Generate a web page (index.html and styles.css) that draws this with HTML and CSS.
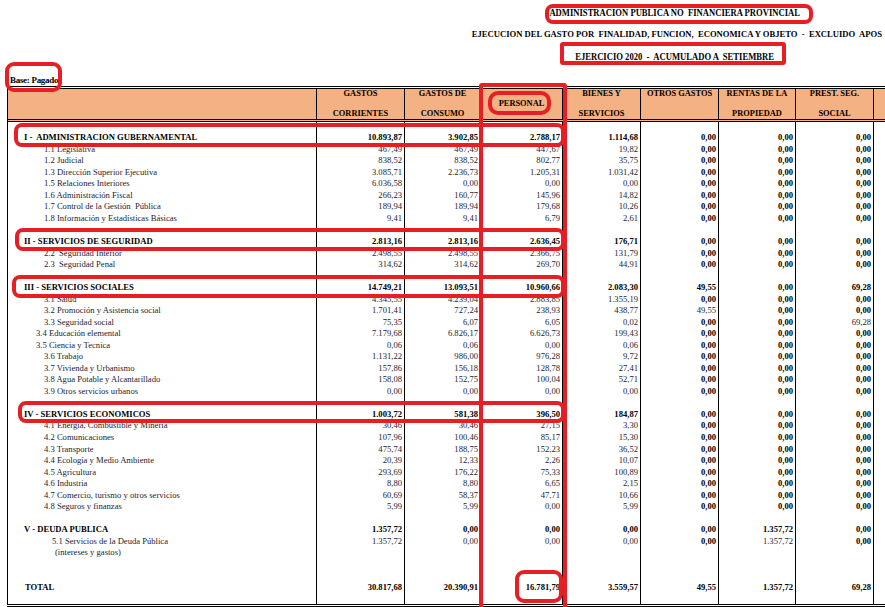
FILE: index.html
```html
<!DOCTYPE html>
<html lang="es">
<head>
<meta charset="utf-8">
<title>Ejecución del gasto - Ejercicio 2020</title>
<link rel="stylesheet" href="styles.css">
</head>
<body>
<div class="page">
  <div class="titles">
    <div class="t1"><span class="cond">ADMINISTRACION PUBLICA NO  FINANCIERA PROVINCIAL</span></div>
    <div class="t2">EJECUCION DEL GASTO POR  FINALIDAD, FUNCION,  ECONOMICA Y OBJETO  -  EXCLUIDO  APOS</div>
    <div class="t3"><span class="cond">EJERCICIO 2020  -  ACUMULADO A  SETIEMBRE</span></div>
  </div>
  <div class="base">Base: Pagado</div>

  <div class="sheet">
    <div class="hrow">
      <div class="h"></div>
      <div class="h"><span>GASTOS</span><span>CORRIENTES</span></div>
      <div class="h"><span>GASTOS DE</span><span>CONSUMO</span></div>
      <div class="h mid"><span>PERSONAL</span></div>
      <div class="h"><span>BIENES Y</span><span>SERVICIOS</span></div>
      <div class="h"><span>OTROS GASTOS</span><span></span></div>
      <div class="h"><span>RENTAS DE LA</span><span>PROPIEDAD</span></div>
      <div class="h"><span>PREST. SEG.</span><span>SOCIAL</span></div>
      <div class="h"></div>
    </div>

    <div class="body">
      <div class="row gap"><div class="c"></div><div class="c"></div><div class="c"></div><div class="c"></div><div class="c"></div><div class="c"></div><div class="c"></div><div class="c"></div><div class="c"></div></div>

      <div class="row sec"><div class="c lab i0">I -  ADMINISTRACION GUBERNAMENTAL</div><div class="c">10.893,87</div><div class="c">3.902,85</div><div class="c">2.788,17</div><div class="c">1.114,68</div><div class="c">0,00</div><div class="c">0,00</div><div class="c">0,00</div><div class="c"></div></div>
      <div class="row"><div class="c lab i3">1.1 Legislativa</div><div class="c">467,49</div><div class="c">467,49</div><div class="c">447,67</div><div class="c">19,82</div><div class="c z">0,00</div><div class="c z">0,00</div><div class="c z">0,00</div><div class="c"></div></div>
      <div class="row"><div class="c lab i3">1.2 Judicial</div><div class="c">838,52</div><div class="c">838,52</div><div class="c">802,77</div><div class="c">35,75</div><div class="c z">0,00</div><div class="c z">0,00</div><div class="c z">0,00</div><div class="c"></div></div>
      <div class="row"><div class="c lab i3">1.3 Dirección Superior Ejecutiva</div><div class="c">3.085,71</div><div class="c">2.236,73</div><div class="c">1.205,31</div><div class="c">1.031,42</div><div class="c z">0,00</div><div class="c z">0,00</div><div class="c z">0,00</div><div class="c"></div></div>
      <div class="row"><div class="c lab i3">1.5 Relaciones Interiores</div><div class="c">6.036,58</div><div class="c">0,00</div><div class="c">0,00</div><div class="c">0,00</div><div class="c z">0,00</div><div class="c z">0,00</div><div class="c z">0,00</div><div class="c"></div></div>
      <div class="row"><div class="c lab i3">1.6 Administración Fiscal</div><div class="c">266,23</div><div class="c">160,77</div><div class="c">145,96</div><div class="c">14,82</div><div class="c z">0,00</div><div class="c z">0,00</div><div class="c z">0,00</div><div class="c"></div></div>
      <div class="row"><div class="c lab i3">1.7 Control de la Gestión  Pública</div><div class="c">189,94</div><div class="c">189,94</div><div class="c">179,68</div><div class="c">10,26</div><div class="c z">0,00</div><div class="c z">0,00</div><div class="c z">0,00</div><div class="c"></div></div>
      <div class="row"><div class="c lab i3">1.8 Información y Estadísticas Básicas</div><div class="c">9,41</div><div class="c">9,41</div><div class="c">6,79</div><div class="c">2,61</div><div class="c z">0,00</div><div class="c z">0,00</div><div class="c z">0,00</div><div class="c"></div></div>
      <div class="row"><div class="c"></div><div class="c"></div><div class="c"></div><div class="c"></div><div class="c"></div><div class="c"></div><div class="c"></div><div class="c"></div><div class="c"></div></div>

      <div class="row sec"><div class="c lab i0">II - SERVICIOS DE SEGURIDAD</div><div class="c">2.813,16</div><div class="c">2.813,16</div><div class="c">2.636,45</div><div class="c">176,71</div><div class="c">0,00</div><div class="c">0,00</div><div class="c">0,00</div><div class="c"></div></div>
      <div class="row"><div class="c lab i3">2.2  Seguridad Interior</div><div class="c">2.498,55</div><div class="c">2.498,55</div><div class="c">2.366,75</div><div class="c">131,79</div><div class="c z">0,00</div><div class="c z">0,00</div><div class="c z">0,00</div><div class="c"></div></div>
      <div class="row"><div class="c lab i3">2.3  Seguridad Penal</div><div class="c">314,62</div><div class="c">314,62</div><div class="c">269,70</div><div class="c">44,91</div><div class="c z">0,00</div><div class="c z">0,00</div><div class="c z">0,00</div><div class="c"></div></div>
      <div class="row"><div class="c"></div><div class="c"></div><div class="c"></div><div class="c"></div><div class="c"></div><div class="c"></div><div class="c"></div><div class="c"></div><div class="c"></div></div>

      <div class="row sec"><div class="c lab i0">III - SERVICIOS SOCIALES</div><div class="c">14.749,21</div><div class="c">13.093,51</div><div class="c">10.960,66</div><div class="c">2.083,30</div><div class="c">49,55</div><div class="c">0,00</div><div class="c">69,28</div><div class="c"></div></div>
      <div class="row"><div class="c lab i3">3.1 Salud</div><div class="c">4.345,55</div><div class="c">4.239,04</div><div class="c">2.883,85</div><div class="c">1.355,19</div><div class="c z">0,00</div><div class="c z">0,00</div><div class="c z">0,00</div><div class="c"></div></div>
      <div class="row"><div class="c lab i3">3.2 Promoción y Asistencia social</div><div class="c">1.701,41</div><div class="c">727,24</div><div class="c">238,93</div><div class="c">438,77</div><div class="c">49,55</div><div class="c z">0,00</div><div class="c z">0,00</div><div class="c"></div></div>
      <div class="row"><div class="c lab i3">3.3 Seguridad social</div><div class="c">75,35</div><div class="c">6,07</div><div class="c">6,05</div><div class="c">0,02</div><div class="c z">0,00</div><div class="c z">0,00</div><div class="c">69,28</div><div class="c"></div></div>
      <div class="row"><div class="c lab i2">3.4 Educación elemental</div><div class="c">7.179,68</div><div class="c">6.826,17</div><div class="c">6.626,73</div><div class="c">199,43</div><div class="c z">0,00</div><div class="c z">0,00</div><div class="c z">0,00</div><div class="c"></div></div>
      <div class="row"><div class="c lab i2">3.5 Ciencia y Tecnica</div><div class="c">0,06</div><div class="c">0,06</div><div class="c">0,00</div><div class="c">0,06</div><div class="c z">0,00</div><div class="c z">0,00</div><div class="c z">0,00</div><div class="c"></div></div>
      <div class="row"><div class="c lab i3">3.6 Trabajo</div><div class="c">1.131,22</div><div class="c">986,00</div><div class="c">976,28</div><div class="c">9,72</div><div class="c z">0,00</div><div class="c z">0,00</div><div class="c z">0,00</div><div class="c"></div></div>
      <div class="row"><div class="c lab i3">3.7 Vivienda y Urbanismo</div><div class="c">157,86</div><div class="c">156,18</div><div class="c">128,78</div><div class="c">27,41</div><div class="c z">0,00</div><div class="c z">0,00</div><div class="c z">0,00</div><div class="c"></div></div>
      <div class="row"><div class="c lab i3">3.8 Agua Potable y Alcantarillado</div><div class="c">158,08</div><div class="c">152,75</div><div class="c">100,04</div><div class="c">52,71</div><div class="c z">0,00</div><div class="c z">0,00</div><div class="c z">0,00</div><div class="c"></div></div>
      <div class="row"><div class="c lab i3">3.9 Otros servicios urbanos</div><div class="c">0,00</div><div class="c">0,00</div><div class="c">0,00</div><div class="c">0,00</div><div class="c z">0,00</div><div class="c z">0,00</div><div class="c z">0,00</div><div class="c"></div></div>
      <div class="row"><div class="c"></div><div class="c"></div><div class="c"></div><div class="c"></div><div class="c"></div><div class="c"></div><div class="c"></div><div class="c"></div><div class="c"></div></div>

      <div class="row sec"><div class="c lab i0">IV - SERVICIOS ECONOMICOS</div><div class="c">1.003,72</div><div class="c">581,38</div><div class="c">396,50</div><div class="c">184,87</div><div class="c">0,00</div><div class="c">0,00</div><div class="c">0,00</div><div class="c"></div></div>
      <div class="row"><div class="c lab i3">4.1 Energía, Combustible y Minería</div><div class="c">30,46</div><div class="c">30,46</div><div class="c">27,15</div><div class="c">3,30</div><div class="c z">0,00</div><div class="c z">0,00</div><div class="c z">0,00</div><div class="c"></div></div>
      <div class="row"><div class="c lab i3">4.2 Comunicaciones</div><div class="c">107,96</div><div class="c">100,46</div><div class="c">85,17</div><div class="c">15,30</div><div class="c z">0,00</div><div class="c z">0,00</div><div class="c z">0,00</div><div class="c"></div></div>
      <div class="row"><div class="c lab i3">4.3 Transporte</div><div class="c">475,74</div><div class="c">188,75</div><div class="c">152,23</div><div class="c">36,52</div><div class="c z">0,00</div><div class="c z">0,00</div><div class="c z">0,00</div><div class="c"></div></div>
      <div class="row"><div class="c lab i3">4.4 Ecología y Medio Ambiente</div><div class="c">20,39</div><div class="c">12,33</div><div class="c">2,26</div><div class="c">10,07</div><div class="c z">0,00</div><div class="c z">0,00</div><div class="c z">0,00</div><div class="c"></div></div>
      <div class="row"><div class="c lab i3">4.5 Agricultura</div><div class="c">293,69</div><div class="c">176,22</div><div class="c">75,33</div><div class="c">100,89</div><div class="c z">0,00</div><div class="c z">0,00</div><div class="c z">0,00</div><div class="c"></div></div>
      <div class="row"><div class="c lab i3">4.6 Industria</div><div class="c">8,80</div><div class="c">8,80</div><div class="c">6,65</div><div class="c">2,15</div><div class="c z">0,00</div><div class="c z">0,00</div><div class="c z">0,00</div><div class="c"></div></div>
      <div class="row"><div class="c lab i3">4.7 Comercio, turismo y otros servicios</div><div class="c">60,69</div><div class="c">58,37</div><div class="c">47,71</div><div class="c">10,66</div><div class="c z">0,00</div><div class="c z">0,00</div><div class="c z">0,00</div><div class="c"></div></div>
      <div class="row"><div class="c lab i3">4.8 Seguros y finanzas</div><div class="c">5,99</div><div class="c">5,99</div><div class="c">0,00</div><div class="c">5,99</div><div class="c z">0,00</div><div class="c z">0,00</div><div class="c z">0,00</div><div class="c"></div></div>
      <div class="row"><div class="c"></div><div class="c"></div><div class="c"></div><div class="c"></div><div class="c"></div><div class="c"></div><div class="c"></div><div class="c"></div><div class="c"></div></div>

      <div class="row sec"><div class="c lab i0">V - DEUDA PUBLICA</div><div class="c">1.357,72</div><div class="c">0,00</div><div class="c">0,00</div><div class="c">0,00</div><div class="c">0,00</div><div class="c">1.357,72</div><div class="c">0,00</div><div class="c"></div></div>
      <div class="row"><div class="c lab i4">5.1 Servicios de la Deuda Pública</div><div class="c">1.357,72</div><div class="c">0,00</div><div class="c">0,00</div><div class="c">0,00</div><div class="c z">0,00</div><div class="c">1.357,72</div><div class="c z">0,00</div><div class="c"></div></div>
      <div class="row"><div class="c lab i5">(intereses y gastos)</div><div class="c"></div><div class="c"></div><div class="c"></div><div class="c"></div><div class="c"></div><div class="c"></div><div class="c"></div><div class="c"></div></div>
      <div class="row"><div class="c"></div><div class="c"></div><div class="c"></div><div class="c"></div><div class="c"></div><div class="c"></div><div class="c"></div><div class="c"></div><div class="c"></div></div>
      <div class="row"><div class="c"></div><div class="c"></div><div class="c"></div><div class="c"></div><div class="c"></div><div class="c"></div><div class="c"></div><div class="c"></div><div class="c"></div></div>

      <div class="row sec"><div class="c lab i1">TOTAL</div><div class="c">30.817,68</div><div class="c">20.390,91</div><div class="c">16.781,79</div><div class="c">3.559,57</div><div class="c">49,55</div><div class="c">1.357,72</div><div class="c">69,28</div><div class="c"></div></div>
      <div class="row tail"><div class="c"></div><div class="c"></div><div class="c"></div><div class="c"></div><div class="c"></div><div class="c"></div><div class="c"></div><div class="c"></div><div class="c"></div></div>
    </div>
  </div>

  <svg class="marks" viewBox="0 0 885 607" width="885" height="607" aria-hidden="true">
    <g fill="none" stroke="#e81e25" stroke-width="4">
      <rect x="547" y="6" width="264" height="16" rx="6"/>
      <rect x="562" y="44" width="222" height="19" rx="1"/>
      <rect x="7" y="64" width="53" height="26" rx="7"/>
      <rect x="481" y="85" width="84" height="526" rx="1"/>
      <rect x="490" y="93" width="59" height="20" rx="8"/>
      <rect x="16" y="125" width="547" height="20" rx="6"/>
      <rect x="17" y="230" width="546" height="19" rx="6"/>
      <rect x="14" y="277" width="549" height="19" rx="6"/>
      <rect x="20" y="403" width="543" height="18" rx="6"/>
      <rect x="517" y="572" width="44" height="29" rx="7"/>
    </g>
  </svg>
</div>
</body>
</html>
```

FILE: styles.css
```css
html, body {
  margin: 0;
  padding: 0;
  background: #ffffff;
  overflow: hidden;
}

.page {
  position: relative;
  width: 885px;
  height: 607px;
  overflow: hidden;
  font-family: "Liberation Serif", "Times New Roman", serif;
  color: #1c1c30;
}

.titles {
  margin-left: 465px;
  width: 420px;
  padding-top: 3px;
  font-weight: bold;
  color: #000;
}

.t1,
.t2,
.t3 {
  white-space: pre;
  height: 20px;
  line-height: 20px;
}

.t1 {
  text-align: center;
  font-size: 10px;
}

.t2 {
  margin-top: 1px;
  text-align: right;
  padding-right: 3px;
  font-size: 8.6px;
}

.t3 {
  margin-top: 3px;
  text-align: center;
  font-size: 10px;
}

.cond {
  display: inline-block;
  transform: scaleX(0.86);
  transform-origin: center;
}

.base {
  margin-top: 7px;
  padding-left: 10px;
  height: 12px;
  font-size: 9px;
  line-height: 12px;
  font-weight: bold;
  letter-spacing: -0.3px;
  color: #000;
}

.sheet {
  margin-left: 7px;
  width: 947px;
  border-left: 1px solid #000;
  border-top: 3px double #000;
  border-bottom: 3px double #000;
}

.hrow,
.row {
  display: grid;
  grid-template-columns: 309px 88px 76px 82px 78px 78px 77px 78px 80px;
}

.hrow {
  height: 30px;
  background: #f4b183;
  border-bottom: 3px double #000;
}

.h {
  box-sizing: border-box;
  border-right: 1px solid #000;
  display: flex;
  flex-direction: column;
  justify-content: space-between;
  align-items: center;
  font-size: 8.4px;
  line-height: 10px;
  font-weight: bold;
  color: #000;
  white-space: nowrap;
  overflow: hidden;
}

.h.mid {
  justify-content: center;
}

.body {
  font-size: 8.6px;
}

.row {
  height: 11.54px;
  line-height: 11.54px;
}

.row.gap {
  height: 10.2px;
}

.row.tail {
  height: 10.2px;
}

.c {
  box-sizing: border-box;
  border-right: 1px solid #000;
  text-align: right;
  padding-right: 2px;
  white-space: pre;
  overflow: hidden;
}

.c.lab {
  text-align: left;
  padding-right: 0;
}

.i0 { padding-left: 16px; }
.i1 { padding-left: 17px; }
.i2 { padding-left: 28px; }
.i3 { padding-left: 36px; }
.i4 { padding-left: 44px; }
.i5 { padding-left: 47px; }

.sec,
.z {
  font-weight: bold;
  color: #000;
}

.marks {
  position: absolute;
  left: 0;
  top: 0;
  pointer-events: none;
}
```
